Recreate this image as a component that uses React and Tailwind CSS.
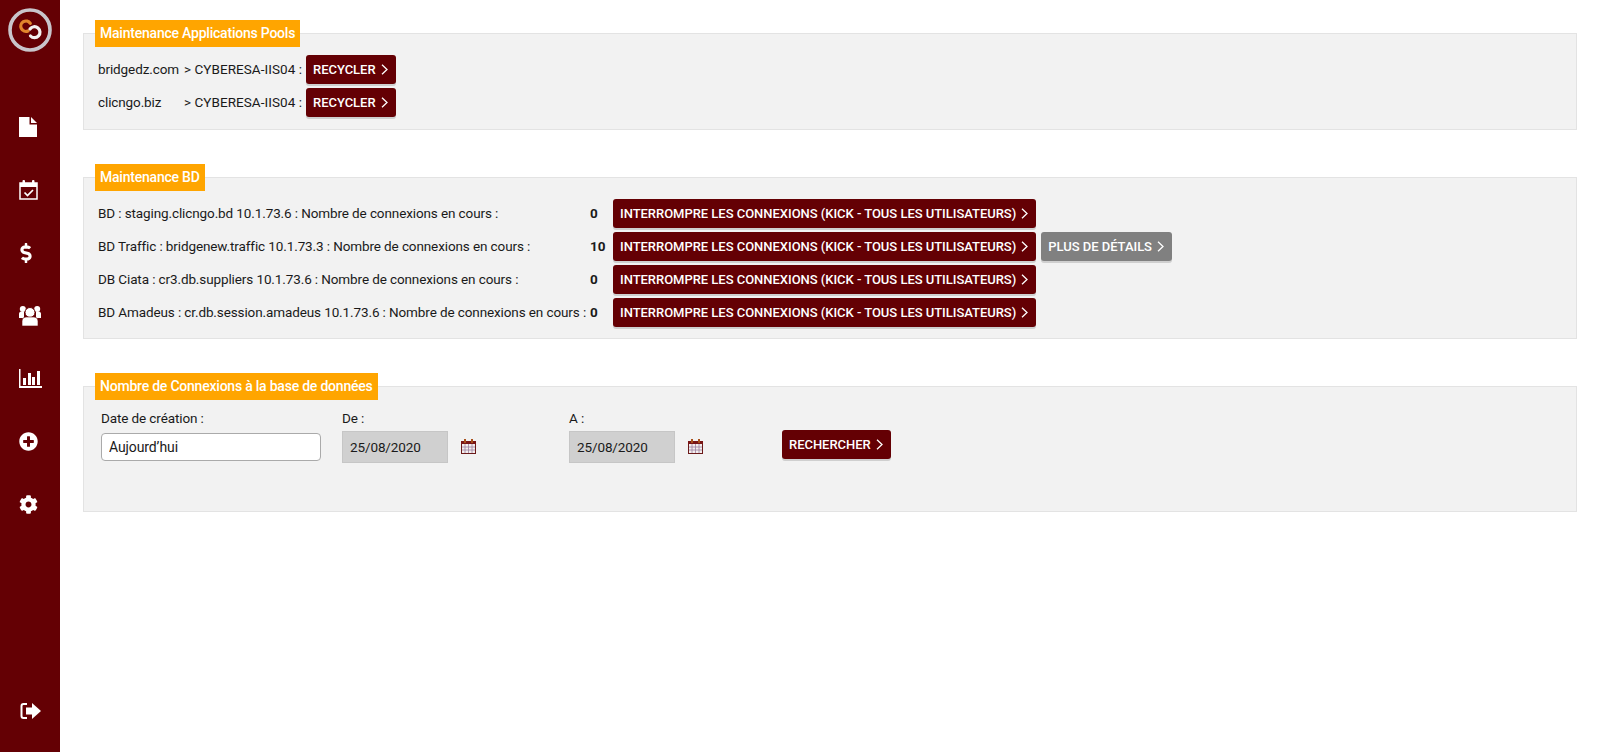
import { FaDollarSign, FaPlusCircle, FaCog } from 'react-icons/fa'

function Logo() {
  return (
    <svg width="46" height="46" viewBox="0 0 46 46" fill="none">
      <circle cx="23" cy="23" r="20" stroke="#c9c5cb" strokeWidth="3.6" />
      <path d="M23.3 16.3 A5.2 5.2 0 1 0 21 24" stroke="#e0852c" strokeWidth="3.2" strokeLinecap="round" />
      <path d="M23 22 A5.5 5.5 0 1 1 23.5 29" stroke="#f4f2f0" strokeWidth="3.2" strokeLinecap="round" />
    </svg>
  )
}

function FileIcon() {
  return (
    <svg width="18" height="20" viewBox="0 0 18 20" fill="white">
      <path d="M0 0 H10.5 V7.5 H18 V20 H0 Z" />
      <path d="M12 0 L18 6 H12 Z" />
    </svg>
  )
}

function CalendarCheckIcon() {
  return (
    <svg width="19" height="20" viewBox="0 0 19 20" fill="none">
      <path d="M1 3 H18 V19 H1 Z" stroke="white" strokeWidth="1.5" />
      <rect x="1" y="3" width="17" height="4" fill="white" />
      <rect x="3.5" y="0" width="2.5" height="5" rx="1" fill="white" />
      <rect x="13" y="0" width="2.5" height="5" rx="1" fill="white" />
      <path d="M5.5 12.5 L8.5 15.5 L14 10" stroke="white" strokeWidth="1.7" />
    </svg>
  )
}

function UsersIcon() {
  return (
    <svg width="22" height="20" viewBox="0 0 22 20" fill="white">
      <circle cx="3.8" cy="3" r="3" />
      <circle cx="18.2" cy="3" r="3" />
      <path d="M0 12 V8 A2.5 2.5 0 0 1 2.5 5.5 H5 V12 Z" />
      <path d="M22 12 V8 A2.5 2.5 0 0 0 19.5 5.5 H17 V12 Z" />
      <circle cx="11" cy="6.5" r="5" stroke="#640004" strokeWidth="1" />
      <path d="M3 20 V15 A4 4 0 0 1 7 11 H15 A4 4 0 0 1 19 15 V20 Z" stroke="#640004" strokeWidth=".6" />
    </svg>
  )
}

function BarsIcon() {
  return (
    <svg width="23" height="19" viewBox="0 0 23 19" fill="white">
      <rect x="0" y="0" width="1.5" height="19" />
      <rect x="0" y="17" width="23" height="2" />
      <rect x="4" y="9" width="3" height="7" />
      <rect x="9" y="4" width="3" height="12" />
      <rect x="13" y="8" width="3" height="8" />
      <rect x="18" y="2" width="3" height="14" />
    </svg>
  )
}

function ExitIcon() {
  return (
    <svg width="21" height="18" viewBox="0 0 21 18" fill="white">
      <path d="M7 1 H3.5 A3 3 0 0 0 .5 4 V14 A3 3 0 0 0 3.5 17 H7 V15 H3.5 A1 1 0 0 1 2.5 14 V4 A1 1 0 0 1 3.5 3 H7 Z" />
      <path d="M6 5.5 H12 V1 L21 9 L12 17 V12.5 H6 Z" />
    </svg>
  )
}

function Chevron() {
  return (
    <svg width="7" height="11" viewBox="0 0 7 11" fill="none" className="ml-[5px] shrink-0">
      <path d="M1 .8 L6 5.5 L1 10.2" stroke="white" strokeWidth="1.3" />
    </svg>
  )
}

function CalendarIcon() {
  return (
    <svg width="15" height="15" viewBox="0 0 15 15" fill="none" className="-mt-[2px] shrink-0">
      <rect x=".5" y="2.5" width="14" height="12" fill="#f4eeee" stroke="#6b1a1a" />
      <rect x="0" y="2" width="15" height="3" fill="#7a1616" />
      <rect x="3" y="0" width="2" height="4" fill="#a8501c" />
      <rect x="10" y="0" width="2" height="4" fill="#a8501c" />
      <path d="M1 8 H14 M1 11 H14 M4 5 V14 M7.5 5 V14 M11 5 V14" stroke="#9c80a0" strokeWidth=".8" />
    </svg>
  )
}

function Btn({ children, gray }) {
  return (
    <button className={`flex h-[29px] items-center rounded-[3px] pl-[7px] pr-[8px] text-[13px] font-medium uppercase tracking-[-0.03px] text-white shadow-[0_2px_0_#cfcfcf] ${gray ? 'bg-[#808080]' : 'bg-[#640004]'}`}>
      {children}
      <Chevron />
    </button>
  )
}

function Panel({ title, className, children }) {
  return (
    <section className={`border border-[#e3e3e3] bg-[#f2f2f2] ${className}`}>
      <h2 className="-mt-[14px] ml-[11px] flex h-[27px] w-fit items-center bg-[#ffa500] px-[5px] text-[14px] font-medium tracking-[-0.22px] text-white">
        {title}
      </h2>
      {children}
    </section>
  )
}

const pools = [
  { site: 'bridgedz.com', server: '> CYBERESA-IIS04 :' },
  { site: 'clicngo.biz', server: '> CYBERESA-IIS04 :' },
]

const databases = [
  { label: 'BD : staging.clicngo.bd 10.1.73.6 : Nombre de connexions en cours :', count: 0 },
  { label: 'BD Traffic : bridgenew.traffic 10.1.73.3 : Nombre de connexions en cours :', count: 10, details: true },
  { label: 'DB Ciata : cr3.db.suppliers 10.1.73.6 : Nombre de connexions en cours :', count: 0 },
  { label: 'BD Amadeus : cr.db.session.amadeus 10.1.73.6 : Nombre de connexions en cours :', count: 0 },
]

const navIcons = [
  <FileIcon />,
  <CalendarCheckIcon />,
  <FaDollarSign size={20} className="-ml-[3px]" />,
  <UsersIcon />,
  <BarsIcon />,
  <FaPlusCircle size={19} />,
  <FaCog size={19} />,
]

export default function App() {
  return (
    <div className="flex h-[752px] bg-white text-[13.5px] tracking-[-0.11px] text-[#1a1a1a] [font-family:Roboto,sans-serif]">
      <aside className="flex w-[60px] shrink-0 flex-col bg-[#640004] text-white">
        <div className="ml-[7px] mt-[7px]">
          <Logo />
        </div>
        <nav className="mt-[42px] flex flex-col">
          {navIcons.map((icon, i) => (
            <a key={i} className="flex h-[63px] items-center pl-[19px]">{icon}</a>
          ))}
        </nav>
        <a className="mb-[32px] mt-auto flex pl-[20px]">
          <ExitIcon />
        </a>
      </aside>

      <main className="flex-1 px-[23px] pt-[33px]">
        <Panel title="Maintenance Applications Pools" className="h-[97px]">
          <div className="ml-[14px] flex flex-col gap-[4px] pt-[8px]">
            {pools.map((p) => (
              <div key={p.site} className="flex items-center">
                <span className="w-[86px]">{p.site}</span>
                <span className="w-[122px] tracking-[0.05px]">{p.server}</span>
                <Btn>Recycler</Btn>
              </div>
            ))}
          </div>
        </Panel>

        <Panel title="Maintenance BD" className="mt-[47px] h-[162px]">
          <div className="ml-[14px] flex flex-col gap-[4px] pt-[8px]">
            {databases.map((d) => (
              <div key={d.label} className="flex items-center">
                <span className="w-[492px] whitespace-nowrap">{d.label}</span>
                <span className="w-[23px] font-bold">{d.count}</span>
                <Btn>Interrompre les connexions (kick - tous les utilisateurs)</Btn>
                {d.details && <div className="ml-[5px]"><Btn gray>Plus de détails</Btn></div>}
              </div>
            ))}
          </div>
        </Panel>

        <Panel title="Nombre de Connexions à la base de données" className="mt-[47px] h-[126px]">
          <div className="ml-[17px] flex items-start pt-[6px]">
            <div className="w-[241px]">
              <label className="mt-[2px] block h-[20px] leading-[20px]">Date de création :</label>
              <input
                readOnly
                value="Aujourd’hui"
                className="mt-[5px] h-[28px] w-[220px] rounded-[4px] border border-[#aaaaaa] bg-white px-[7px] text-[14px] outline-none"
              />
            </div>
            <div className="w-[227px]">
              <label className="mt-[2px] block h-[20px] leading-[20px]">De :</label>
              <div className="mt-[3px] flex items-center gap-[13px]">
                <div className="flex h-[32px] w-[106px] items-center border border-[#c6c6c6] bg-[#d0d0d0] pl-[7px]">25/08/2020</div>
                <CalendarIcon />
              </div>
            </div>
            <div className="w-[213px]">
              <label className="mt-[2px] block h-[20px] leading-[20px]">A :</label>
              <div className="mt-[3px] flex items-center gap-[13px]">
                <div className="flex h-[32px] w-[106px] items-center border border-[#c6c6c6] bg-[#d0d0d0] pl-[7px]">25/08/2020</div>
                <CalendarIcon />
              </div>
            </div>
            <div className="mt-[24px]">
              <Btn>Rechercher</Btn>
            </div>
          </div>
        </Panel>
      </main>
    </div>
  )
}
